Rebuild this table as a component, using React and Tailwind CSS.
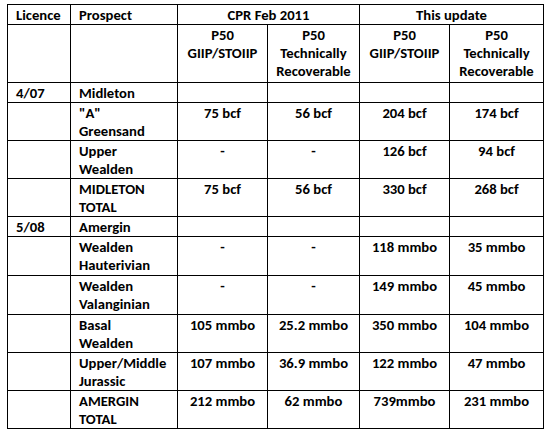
const rows = [
  { lic: "4/07", name: ["Midleton"], h: "h-[20px]", vals: ["", "", "", ""] },
  { lic: "", name: ['"A"', "Greensand"], h: "h-[38px]", vals: ["75 bcf", "56 bcf", "204 bcf", "174 bcf"] },
  { lic: "", name: ["Upper", "Wealden"], h: "h-[38px]", vals: ["-", "-", "126 bcf", "94 bcf"] },
  { lic: "", name: ["MIDLETON", "TOTAL"], h: "h-[37px]", vals: ["75 bcf", "56 bcf", "330 bcf", "268 bcf"] },
  { lic: "5/08", name: ["Amergin"], h: "h-[20px]", vals: ["", "", "", ""] },
  { lic: "", name: ["Wealden", "Hauterivian"], h: "h-[39px]", vals: ["-", "-", "118 mmbo", "35 mmbo"] },
  { lic: "", name: ["Wealden", "Valanginian"], h: "h-[39px]", vals: ["-", "-", "149 mmbo", "45 mmbo"] },
  { lic: "", name: ["Basal", "Wealden"], h: "h-[38px]", vals: ["105 mmbo", "25.2 mmbo", "350 mmbo", "104 mmbo"] },
  { lic: "", name: ["Upper/Middle", "Jurassic"], h: "h-[38px]", vals: ["107 mmbo", "36.9 mmbo", "122 mmbo", "47 mmbo"] },
  { lic: "", name: ["AMERGIN", "TOTAL"], h: "h-[38px]", vals: ["212 mmbo", "62 mmbo", "739mmbo", "231 mmbo"] },
];

const cell = "border border-black align-top px-[8px] pt-[1px]";

export default function App() {
  return (
    <div className="w-[551px] h-[432px] bg-white pt-[4px] pl-[7px] font-['Carlito','Calibri',sans-serif] font-bold text-[14.67px] leading-[18px] text-black">
      <table className="table-fixed border-collapse w-[537px]">
        <colgroup>
          <col className="w-[63px]" />
          <col className="w-[107px]" />
          <col className="w-[90px]" />
          <col className="w-[92px]" />
          <col className="w-[90px]" />
          <col className="w-[94px]" />
        </colgroup>
        <tbody>
          <tr className="h-[20px]">
            <td className={cell}>Licence</td>
            <td className={cell}>Prospect</td>
            <td colSpan={2} className={cell + " text-center"}>CPR Feb 2011</td>
            <td colSpan={2} className={cell + " text-center"}>This update</td>
          </tr>
          <tr className="h-[58px]">
            <td className={cell}></td>
            <td className={cell}></td>
            <td className={cell + " text-center"}>P50<br />GIIP/STOIIP</td>
            <td className={cell + " text-center"}>P50<br />Technically<br />Recoverable</td>
            <td className={cell + " text-center"}>P50<br />GIIP/STOIIP</td>
            <td className={cell + " text-center"}>P50<br />Technically<br />Recoverable</td>
          </tr>
          {rows.map((r, i) => (
            <tr key={i} className={r.h}>
              <td className={cell}>{r.lic}</td>
              <td className={cell}>
                {r.name.map((n, j) => (
                  <div key={j}>{n}</div>
                ))}
              </td>
              {r.vals.map((v, j) => (
                <td key={j} className={cell + " text-center"}>{v}</td>
              ))}
            </tr>
          ))}
        </tbody>
      </table>
    </div>
  );
}
